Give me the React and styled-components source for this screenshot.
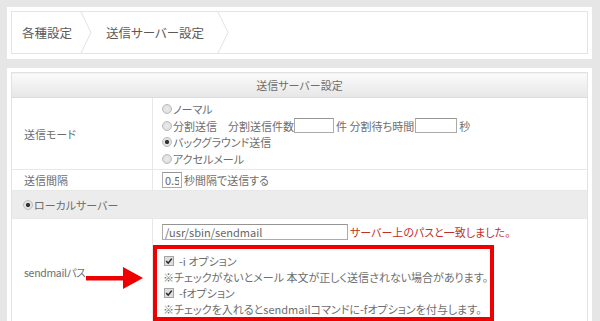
import React from "react";
import styled, { createGlobalStyle } from "styled-components";

const GlobalStyle = createGlobalStyle`
  html, body { margin: 0; padding: 0; overflow: hidden; }
  body {
    background: #e6e6e6;
    font-family: "Noto Sans CJK JP", "Noto Sans", sans-serif;
    font-feature-settings: "palt";
    color: #6e6e6e;
  }
`;

const Page = styled.div`
  position: relative;
  padding: 7px 8px 0 7px;
`;

const Panel = styled.div`
  background: #fff;
  padding: 4px 4px ${(p) => p.$bottom || 0}px 4px;
  margin-bottom: ${(p) => p.$gap || 0}px;
`;

const Breadcrumb = styled.div`
  display: flex;
  align-items: stretch;
  height: 41px;
  border: 1px solid #e4e4e4;
`;

const Crumb = styled.div`
  display: flex;
  align-items: center;
  padding-left: ${(p) => p.$pad}px;
  padding-right: ${(p) => p.$right}px;
  font-size: 12.5px;
  color: #5a5a5a;
`;

const ChevronSvg = styled.svg`
  display: block;
  flex: none;
`;

const Chevron = () => (
  <ChevronSvg width="12" height="41" viewBox="0 0 12 41">
    <path d="M1 0 L11 20.5 L1 41" fill="none" stroke="#e2e2e2" strokeWidth="1" />
  </ChevronSvg>
);

const SettingsTable = styled.table`
  width: 577px;
  border-collapse: collapse;
  border: 1px solid #e2e2e2;
  font-size: 11px;
`;

const HeaderCell = styled.th`
  height: 24px;
  padding: 0;
  font-weight: normal;
  text-align: center;
  color: #6e6e6e;
  background: linear-gradient(#fbfbfb, #e6e6e6);
  border-bottom: 1px solid #dcdcdc;
`;

const Row = styled.tr`
  background: ${(p) => (p.$shade ? "#ececec" : "#fff")};
  border-bottom: 1px solid #e8e8e8;
`;

const LabelCell = styled.td`
  width: 128px;
  padding: 0 0 0 12px;
  border-right: 1px solid #e8e8e8;
  vertical-align: middle;
  font-size: ${(p) => (p.$tight ? "10.5px" : "11px")};
  letter-spacing: ${(p) => (p.$tight ? "-0.3px" : "0")};
`;

const ValueCell = styled.td`
  padding: ${(p) => p.$pad || "3px 9px"};
  vertical-align: top;
`;

const WideCell = styled.td`
  height: 27px;
  padding: 0 0 0 11px;
  vertical-align: middle;
`;

const OptionLine = styled.div`
  display: flex;
  align-items: center;
  height: ${(p) => p.$h || 16.5}px;
  white-space: nowrap;
`;

const Radio = styled.span`
  display: inline-block;
  box-sizing: border-box;
  width: 10px;
  height: 10px;
  margin-right: 1px;
  border-radius: 50%;
  border: 1px solid #bcbcbc;
  background: ${(p) =>
    p.$checked
      ? "radial-gradient(circle, #333 0 1.8px, #e2e2e2 2.4px)"
      : "radial-gradient(circle, #ececec, #d8d8d8)"};
  flex: none;
`;

const TextInput = styled.input`
  box-sizing: border-box;
  width: ${(p) => p.$w}px;
  height: ${(p) => p.$h || 15}px;
  margin: 0 ${(p) => p.$mr || 2}px 0 ${(p) => p.$ml || 0}px;
  padding: 0 2px;
  border: 1px solid #ababab;
  border-top-color: #949494;
  font-family: "Noto Sans CJK JP", sans-serif;
  font-size: 11px;
  color: #666;
  background: #fff;
  outline: none;
`;

const Note = styled.span`
  color: #c0302a;
  font-size: 11px;
`;

const Highlight = styled.div`
  box-sizing: border-box;
  width: 341px;
  margin: 5px 0 0 -9px;
  padding: 4px 6px 0 6px;
  border: 4px solid #ee0000;
  background: #fff;
`;

const CheckLine = styled.div`
  display: flex;
  align-items: center;
  height: 16px;
  padding-left: ${(p) => p.$indent || 0}px;
  white-space: nowrap;
`;

const CheckSvg = styled.svg`
  display: block;
  margin-right: 5px;
  flex: none;
`;

const CheckBox = () => (
  <CheckSvg width="10" height="10" viewBox="0 0 10 10">
    <rect x="0.5" y="0.5" width="9" height="9" fill="#dedede" stroke="#a5a5a5" />
    <path d="M2.2 5 L4.2 7.2 L7.8 2.6" fill="none" stroke="#222" strokeWidth="1.5" />
  </CheckSvg>
);

const ArrowSvg = styled.svg`
  position: absolute;
  left: 86px;
  top: 266px;
`;

const Arrow = () => (
  <ArrowSvg width="58" height="24" viewBox="0 0 58 24">
    <rect x="0" y="10" width="40" height="4.5" fill="#ee0000" />
    <polygon points="37,1 57,12 37,23" fill="#ee0000" />
  </ArrowSvg>
);

export default function App() {
  return (
    <>
      <GlobalStyle />
      <Page>
        <Panel $bottom={5} $gap={9}>
          <Breadcrumb>
            <Crumb $pad={10} $right={8}>各種設定</Crumb>
            <Chevron />
            <Crumb $pad={14} $right={13}>送信サーバー設定</Crumb>
            <Chevron />
          </Breadcrumb>
        </Panel>
        <Panel>
          <SettingsTable>
            <thead>
              <tr>
                <HeaderCell colSpan={2}>送信サーバー設定</HeaderCell>
              </tr>
            </thead>
            <tbody>
              <Row>
                <LabelCell>送信モード</LabelCell>
                <ValueCell $pad="3px 9px 2px">
                  <OptionLine>
                    <Radio />ノーマル
                  </OptionLine>
                  <OptionLine>
                    <Radio />分割送信　分割送信件数
                    <TextInput $w={40} />件 分割待ち時間
                    <TextInput $w={42} $ml={1} />秒
                  </OptionLine>
                  <OptionLine>
                    <Radio $checked />バックグラウンド送信
                  </OptionLine>
                  <OptionLine>
                    <Radio />アクセルメール
                  </OptionLine>
                </ValueCell>
              </Row>
              <Row>
                <LabelCell>送信間隔</LabelCell>
                <ValueCell $pad="2px 9px 2px">
                  <OptionLine $h={16}>
                    <TextInput $w={20} $h={16} defaultValue="0.5" readOnly />
                    秒間隔で送信する
                  </OptionLine>
                </ValueCell>
              </Row>
              <Row $shade>
                <WideCell colSpan={2}>
                  <OptionLine>
                    <Radio $checked />ローカルサーバー
                  </OptionLine>
                </WideCell>
              </Row>
              <Row>
                <LabelCell $tight>sendmailパス</LabelCell>
                <ValueCell $pad="5px 9px 5px">
                  <OptionLine $h={16}>
                    <TextInput $w={186} $h={16} defaultValue="/usr/sbin/sendmail" readOnly />
                    <Note>サーバー上のパスと一致しました。</Note>
                  </OptionLine>
                  <Highlight>
                    <CheckLine $indent={1}>
                      <CheckBox />-i オプション
                    </CheckLine>
                    <CheckLine>※チェックがないとメール 本文が正しく送信されない場合があります。</CheckLine>
                    <CheckLine $indent={1}>
                      <CheckBox />-fオプション
                    </CheckLine>
                    <CheckLine>※チェックを入れるとsendmailコマンドに-fオプションを付与します。</CheckLine>
                  </Highlight>
                </ValueCell>
              </Row>
            </tbody>
          </SettingsTable>
        </Panel>
        <Arrow />
      </Page>
    </>
  );
}
